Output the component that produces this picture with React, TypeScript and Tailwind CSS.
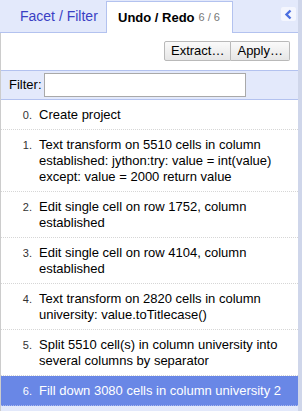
import React from "react";

const items: string[] = [
  "Create project",
  "Text transform on 5510 cells in column established: jython:try: value = int(value) except: value = 2000 return value",
  "Edit single cell on row 1752, column established",
  "Edit single cell on row 4104, column established",
  "Text transform on 2820 cells in column university: value.toTitlecase()",
  "Split 5510 cell(s) in column university into several columns by separator",
  "Fill down 3080 cells in column university 2",
];

export default function App() {
  return (
    <div className="w-[302px] h-[411px] flex overflow-hidden bg-[#e3e9fb] font-['Liberation_Sans',Arial,sans-serif] text-[13px] text-black">
      <div className="flex-1 flex flex-col min-w-0">
        {/* Tabs header */}
        <div className="h-[33px] flex items-end border-b border-[#b3c2ef] shrink-0">
          <div className="w-[106px] h-[31px] flex items-center pl-[20px] text-[14px] text-[#3a3fc4]">
            Facet / Filter
          </div>
          <div className="h-[32px] -mb-px flex items-center pl-[11px] pr-[12px] bg-white border border-b-0 border-[#b3c2ef]">
            <span className="font-bold text-[13px]">Undo / Redo</span>
            <span className="ml-[4px] text-[11px] text-[#777]">6 / 6</span>
          </div>
          <div className="ml-auto self-start mt-[7px] mr-[2px] w-[15px] h-[14px] rounded-[2px] bg-[#f4f6fe] flex items-center justify-center">
            <svg width="9" height="11" viewBox="0 0 9 11">
              <polyline points="6.5,1.5 2.5,5.5 6.5,9.5" fill="none" stroke="#4b6fe0" strokeWidth="2.4" strokeLinejoin="miter" />
            </svg>
          </div>
        </div>
        {/* Body */}
        <div className="flex-1 flex flex-col border-l border-[#cccccc] min-h-0">
          <div className="h-[37px] bg-white flex justify-end items-start pt-[8px] pr-[8px] shrink-0">
            <div className="flex">
              <button className="h-[20px] px-[6px] text-[13px] leading-[18px] border border-[#b9b9b9] rounded-l-[2px] bg-gradient-to-b from-[#fafafa] to-[#e6e6e6] text-black">
                Extract…
              </button>
              <button className="h-[20px] px-[6px] text-[13px] leading-[18px] border border-l-0 border-[#b9b9b9] rounded-r-[2px] bg-gradient-to-b from-[#fafafa] to-[#e6e6e6] text-black">
                Apply…
              </button>
            </div>
          </div>
          <div className="h-[30px] shrink-0 flex items-center pl-[8px] border-y border-[#b3c2ef] bg-[#e3e9fb]">
            <span className="text-[13px]">Filter:</span>
            <input className="ml-[2px] w-[202px] h-[24px] bg-white border border-[#a9a9a9] outline-none px-1 text-[13px]" />
          </div>
          <div className="bg-white">
            {items.map((t, i) => {
              const sel = i === items.length - 1;
              return (
                <div
                  key={i}
                  className={
                    "flex items-baseline pt-[7px] pb-[6px] pr-[14px] border-b border-dotted leading-[16px] " +
                    (sel ? "bg-[#6987e6] text-white border-[#a9b8ee]" : "border-[#d6d6d6]")
                  }
                >
                  <span className={"w-[31px] shrink-0 text-right text-[11px] " + (sel ? "text-white" : "text-[#333]")}>
                    {i}.
                  </span>
                  <span className="ml-[7px] text-[13px]">{t}</span>
                </div>
              );
            })}
          </div>
        </div>
      </div>
      <div className="w-[4px] shrink-0 bg-[#cfd6ea]" />
    </div>
  );
}
